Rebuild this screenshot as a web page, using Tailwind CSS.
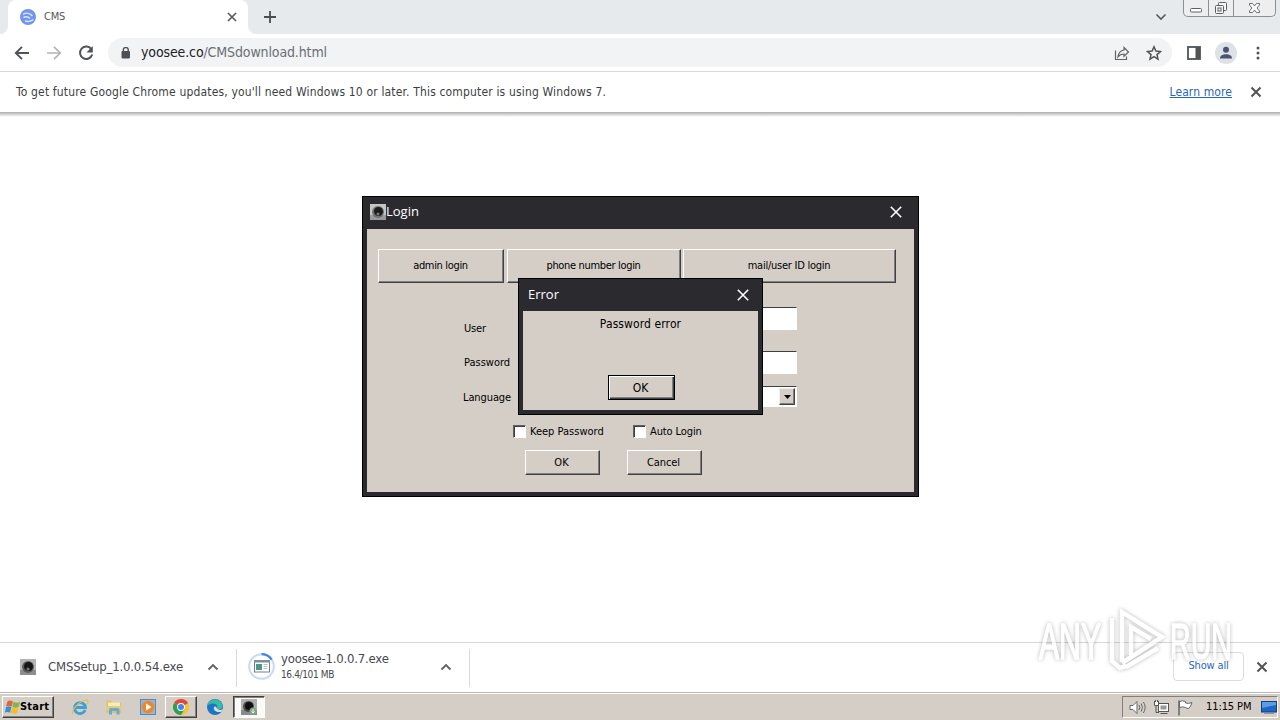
<!DOCTYPE html>
<html lang="en">
  <head>
    <meta charset="UTF-8" />
    <meta name="viewport" content="width=device-width, initial-scale=1.0" />
    <title>CMS</title>
    <script src="https://cdn.jsdelivr.net/npm/@tailwindcss/browser@4"></script>
  </head>
  <body class="relative flex h-[720px] w-[1280px] flex-col overflow-hidden bg-white font-['DejaVu_Sans_Condensed','DejaVu_Sans',sans-serif] text-[11px] text-black whitespace-nowrap">
    <!-- Tab strip -->
    <header class="flex h-[34px] shrink-0 bg-[#e7eaed]">
      <div class="w-2 bg-white"><div class="h-full rounded-br-lg bg-[#e7eaed]"></div></div>
      <div class="flex w-[240px] items-center rounded-t-lg bg-white pr-[10px] pl-3">
        <svg class="size-4" viewBox="0 0 16 16">
          <circle cx="8" cy="8" r="8" fill="#7196ec" />
          <path d="M3 5.500C6 3.500 10 4 12.500 7M3.500 8.500c3-1.500 5-.5 6.500 1M5 12c3 .8 6 .5 8.500-1.500" fill="none" stroke="#dbe7ff" stroke-width="1.500" />
        </svg>
        <span class="ml-2 tracking-[-0.2px] text-[#54585c]">CMS</span>
        <svg class="ml-auto size-3" viewBox="0 0 12 12" stroke="#54585c" stroke-width="1.600"><path d="M2 2l8 8M10 2l-8 8" /></svg>
      </div>
      <div class="w-2 bg-white"><div class="h-full rounded-bl-lg bg-[#e7eaed]"></div></div>
      <svg class="mt-[11px] ml-2 size-3" viewBox="0 0 12 12" stroke="#4a4e52" stroke-width="1.800"><path d="M6 0v12M0 6h12" /></svg>
      <svg class="mt-[13px] ml-auto h-2 w-3" viewBox="0 0 12 8" fill="none" stroke="#55595d" stroke-width="1.600"><path d="M1.500 1.500L6 6l4.500-4.500" /></svg>
      <div class="mr-1 ml-4 flex h-[17px] w-[93px] rounded-b-[5px] border border-t-0 border-[#8c8f93] bg-[#eceef0]">
        <div class="w-[25px] border-r border-[#8c8f93]">
          <svg class="h-4 w-6" viewBox="0 0 24 16" fill="#fff" stroke="#5c6065"><rect x="6.500" y="8.500" width="11" height="3.500" rx="1" /></svg>
        </div>
        <div class="w-[25px] border-r border-[#8c8f93]">
          <svg class="h-4 w-6" viewBox="0 0 24 16" fill="#f4f5f6" stroke="#5c6065"><rect x="9.500" y="2.500" width="8" height="8" rx="1" /><rect x="6.500" y="5.500" width="8" height="8" rx="1" /><rect x="9" y="8" width="3" height="3" /></svg>
        </div>
        <svg class="h-4 w-[41px]" viewBox="0 0 41 16" fill="#fff" stroke="#6a6e72"><path d="M15.500 3.500h3l2 2.500 2-2.500h3v1.500L23 8l2.500 3v1.500h-3l-2-2.500-2 2.500h-3V11L18 8l-2.500-3z" /></svg>
      </div>
    </header>

    <!-- Toolbar -->
    <div class="flex h-[38px] shrink-0 items-center border-b border-[#d5d7d9] pl-[14px]">
      <svg class="size-4" viewBox="0 0 16 16" fill="none" stroke="#505357" stroke-width="1.900"><path d="M15 8H2M8 1.800L1.800 8 8 14.200" /></svg>
      <svg class="ml-4 size-4" viewBox="0 0 16 16" fill="none" stroke="#b2b4b7" stroke-width="1.700"><path d="M1 8h13M8 1.800L14.200 8 8 14.200" /></svg>
      <svg class="ml-4 size-4" viewBox="0 0 16 16"><path d="M13.300 4.200A6.200 6.200 0 1 0 14.200 9.500" fill="none" stroke="#505357" stroke-width="2" /><path d="M14.800 1v6.500H8.500z" fill="#505357" /></svg>
      <div class="ml-[14px] flex h-[29px] w-[1064px] items-center rounded-full bg-[#f1f3f4] pr-[10px] pl-3">
        <svg class="h-3 w-3" viewBox="0 0 12 12"><rect x="1.500" y="4" width="8.500" height="7.500" rx="1" fill="#4c5054" /><path d="M3.400 4.500v-2a2.400 2 0 0 1 4.800 0v2" fill="none" stroke="#4c5054" stroke-width="1.400" /></svg>
        <span class="ml-[9px] text-[14px] tracking-[-0.12px] text-[#202124]">yoosee.co<span class="text-[#6b7075]">/CMSdownload.html</span></span>
        <svg class="ml-auto size-4" viewBox="0 0 16 16" fill="none" stroke="#606468" stroke-width="1.200"><path d="M1.500 5.500v9h11v-3M10 5V2.500L14.500 7 10 11.300V9C7.500 9 5.500 9.800 4 11.800 4.500 8 6.500 5.500 10 5z" /></svg>
        <svg class="ml-4 size-4" viewBox="0 0 16 16" fill="none" stroke="#505357" stroke-width="1.500"><path d="M8 1.800l1.900 4.300 4.600.4L11 9.600l1 4.500-4-2.400-4 2.400 1-4.500L1.500 6.500l4.600-.4z" /></svg>
      </div>
      <svg class="ml-[15px] h-[14px] w-[14px]" viewBox="0 0 14 14"><rect x="1" y="1" width="12" height="12" fill="#fff" stroke="#505357" stroke-width="1.800" /><path d="M8.500 1H13v12H8.500z" fill="#505357" /></svg>
      <svg class="ml-[14px] size-[22px]" viewBox="0 0 22 22"><circle cx="11" cy="11" r="11" fill="#dee1e5" /><circle cx="11" cy="7.800" r="3" fill="#4a5573" /><path d="M5 16.500c0-3 3-4.300 6-4.300s6 1.300 6 4.300z" fill="#4a5573" /></svg>
      <svg class="ml-[19px] h-4 w-1" viewBox="0 0 4 16" fill="#505357"><circle cx="2" cy="3" r="1.500" /><circle cx="2" cy="8" r="1.500" /><circle cx="2" cy="13" r="1.500" /></svg>
    </div>

    <!-- Infobar -->
    <div class="flex h-10 shrink-0 items-center pr-[18px] pl-4 text-[12px]">
      <span class="tracking-[0.16px] text-[#3c3f42]">To get future Google Chrome updates, you'll need Windows 10 or later. This computer is using Windows 7.</span>
      <span class="ml-auto tracking-[0.1px] text-[#2a66b8] underline">Learn more</span>
      <svg class="ml-[18px] size-3" viewBox="0 0 12 12" stroke="#505357" stroke-width="2"><path d="M1.500 1.500l9 9M10.500 1.500l-9 9" /></svg>
    </div>
    <div class="h-[5px] shrink-0 bg-gradient-to-b from-[#adadad] to-white"></div>

    <main class="grow"></main>

    <!-- Download shelf -->
    <div class="flex h-[50px] shrink-0 items-center border-t border-[#d7d8da] pr-3">
      <div class="flex h-[38px] w-[237px] items-center border-r border-[#d7d8da] pr-[17px] pb-[2px] pl-5">
        <svg class="size-4" viewBox="0 0 16 16"><rect width="16" height="16" fill="#b4b4b4" /><path d="M0 11h16v5H0z" fill="#8e8e8e" /><circle cx="8" cy="8" r="6" fill="#5d5d5d" /><circle cx="8.500" cy="7.500" r="4.500" fill="#161616" /><circle cx="8" cy="10" r="1.500" fill="#777" /></svg>
        <span class="ml-3 text-[13px] tracking-[-0.16px] text-[#46494d]">CMSSetup_1.0.0.54.exe</span>
        <svg class="ml-auto h-2 w-3" viewBox="0 0 12 8" fill="none" stroke="#606468" stroke-width="1.900"><path d="M1.500 6.500L6 2l4.500 4.500" /></svg>
      </div>
      <div class="flex h-[38px] w-[233px] items-center border-r border-[#d7d8da] pr-[17px] pb-[2px] pl-[11px]">
        <svg class="size-[27px]" viewBox="0 0 27 27">
          <circle cx="13.500" cy="13.500" r="12.300" fill="none" stroke="#c9daf3" stroke-width="2" />
          <path d="M13.500 1.200A12.300 12.300 0 0 1 23.700 6.600" fill="none" stroke="#4285e8" stroke-width="2.200" />
          <rect x="6.500" y="7.500" width="15" height="11.500" fill="#fff" stroke="#71808c" />
          <path d="M6 7h16v2.500H6z" fill="#7d8ea0" /><path d="M8 11h6v6H8z" fill="#519583" /><path d="M15.500 11.500h4M15.500 13.500h4M15.500 15.500h4" stroke="#b6c1d0" />
        </svg>
        <div class="ml-[6px] flex flex-col text-[#46494d]">
          <span class="text-[13px] leading-[17px] tracking-[-0.2px]">yoosee-1.0.0.7.exe</span>
          <span class="text-[10px] leading-[16px] tracking-[-0.36px]">16.4/101 MB</span>
        </div>
        <svg class="ml-auto h-2 w-3" viewBox="0 0 12 8" fill="none" stroke="#606468" stroke-width="1.900"><path d="M1.500 6.500L6 2l4.500 4.500" /></svg>
      </div>
      <div class="mb-[2px] ml-auto flex h-[29px] w-[71px] items-center justify-center rounded border border-[#dadce0] pb-px tracking-[-0.15px] text-[#2a66c0]"><span>Show all</span></div>
      <svg class="ml-3 mb-[2px] size-3" viewBox="0 0 12 12" stroke="#505357" stroke-width="2"><path d="M1.500 1.500l9 9M10.500 1.500l-9 9" /></svg>
    </div>

    <!-- Taskbar -->
    <footer class="flex h-[28px] shrink-0 items-center border-t border-[#bcb8b2] bg-[#d5cec7] pt-px shadow-[inset_0_1px_0_#fff]">
      <div class="ml-[2px] flex h-[22px] w-[52px] items-center border border-t-white border-r-[#404040] border-b-[#404040] border-l-white pl-[2px] shadow-[inset_-1px_-1px_0_#808080]">
        <svg class="h-4 w-[15px]" viewBox="0 0 16 16"><path d="M2.500 2C4.500.5 6 1 8.500 2L7.200 7.500C5 6.300 3.300 6.300 1.200 7.300z" fill="#e2643a" /><path d="M9.200 2.500c2 1.200 4 1.200 6.800 0L14.500 8c-2 1-4 1-6.500 0z" fill="#82b541" /><path d="M1.100 8c2-1 3.500-1 5.800 0L5.400 14C3.500 13 2 13-.2 14z" fill="#3c8ed2" /><path d="M7.700 8.500c2 1 4 1 6.600 0l-1.600 6c-2 1-4 1-6.500 0z" fill="#f4be2b" /></svg>
        <span class="tracking-[0.2px] font-bold">Start</span>
      </div>
      <svg class="ml-[17px] size-[18px]" viewBox="0 0 18 18"><path d="M14.200 12A5.500 5.500 0 1 1 14.500 9.500H5" fill="none" stroke="#3d9fd8" stroke-width="2.800" /><path d="M2 16.500C-1 13 9 2 16 2c2 1 .5 3.500-.5 5" fill="none" stroke="#e4bf4a" stroke-width="1.200" /></svg>
      <svg class="ml-4 size-[18px]" viewBox="0 0 18 18"><path d="M1.500 2.500h5l1.500 2h8V15H1.500z" fill="#e2c25f" /><path d="M3 4.500h12V10H3z" fill="#f7ecc0" /><path d="M1.500 8h15v5h-15z" fill="#e7cd70" /><path d="M4 16.500V12c0-2 2-2 2-2h6.500s2 0 2 2v4.500h-3V13h-4.500v3.500z" fill="#64acd6" /></svg>
      <svg class="ml-[17px] size-4" viewBox="0 0 16 16"><rect x=".5" y=".5" width="15" height="15" fill="#8fb8dc" stroke="#5b88b4" /><circle cx="8" cy="8" r="6.200" fill="#f0862a" /><path d="M6 4.500L11.500 8 6 11.500z" fill="#fff" /></svg>
      <div class="ml-[9px] flex h-[22px] w-[32px] items-center justify-center border border-t-white border-r-[#404040] border-b-[#404040] border-l-white shadow-[inset_-1px_-1px_0_#808080]">
        <svg class="size-4" viewBox="0 0 16 16"><circle cx="8" cy="8" r="8" fill="#f4c430" /><path d="M8 8L1.070 4A8 8 0 0 1 14.930 4z" fill="#dd4b3e" /><path d="M8 8L1.070 4A8 8 0 0 0 8 16l3.500-6z" fill="#2f9e55" /><path d="M8 4h6.930L8 8z" fill="#dd4b3e" /><circle cx="8" cy="8" r="3.900" fill="#fff" /><circle cx="8" cy="8" r="3" fill="#4285e8" /></svg>
      </div>
      <svg class="ml-[10px] size-4" viewBox="0 0 16 16"><circle cx="8" cy="8" r="8" fill="#1f75c4" /><path d="M.3 6.500C1.500 1 8-1 12 1.500S16 9 13.500 10c-2 .6-3.500 0-3.500-1 1.500-3-2-5-5-4.500C2.500 5 .8 5.700.3 6.500z" fill="#35bda6" /><path d="M7 8c-1 3 2 6 7.500 4.700L16 10c-2 1.500-5 1-6-.5S9 7 7 8z" fill="#d9dfdf" /></svg>
      <div class="ml-[10px] flex h-[22px] w-[32px] items-center justify-center border border-t-[#404040] border-r-white border-b-white border-l-[#404040] bg-[#fbfaf9] shadow-[inset_1px_1px_0_#808080]">
        <svg class="size-4" viewBox="0 0 16 16"><rect width="16" height="16" fill="#b0b0b0" /><path d="M0 11h16v5H0z" fill="#8a8a8a" /><circle cx="7.500" cy="7.500" r="5.500" fill="#4d4d4d" /><circle cx="8" cy="7" r="4" fill="#111" /><circle cx="12" cy="12" r="3.500" fill="#7fa88b" /><path d="M12 10v4M10.500 12.500l1.500 1.500 1.500-1.500" stroke="#eef5ef" fill="none" /></svg>
      </div>
      <div class="mr-[2px] ml-auto flex h-[22px] w-[156px] items-center border border-t-[#808080] border-r-white border-b-white border-l-[#808080] pl-[6px]">
        <svg class="size-[17px]" viewBox="0 0 17 17" fill="#fff" stroke="#666"><path d="M1 6.500h3L8 2.500v12l-4-4H1z" /><path d="M10 6q1.500 2.500 0 5M12.200 4.500q2.500 4 0 8M14.400 3q3.500 5.500 0 11" fill="none" /></svg>
        <svg class="ml-[7px] size-[17px]" viewBox="0 0 17 17" fill="#fff" stroke="#555"><rect x="5.500" y="4.500" width="10" height="8" /><path d="M7.500 6.500h6v4h-6z" fill="#999" stroke="none" /><path d="M7.500 14.500h7M3 7v6.500h3" fill="none" /><path d="M1.500 2v4.500h4V2M2.500 1v2M4.500 1v2" /></svg>
        <svg class="ml-[7px] size-[17px]" viewBox="0 0 17 17" fill="#fff" stroke="#666"><path d="M2.500 2.500q3-1.500 6 0v1.500q3 1 6.500-.5-1 4-3.500 6-1.500 0-3-1-3-1.200-6 0z" /><path d="M2 1.500v15" stroke-width="1.500" /></svg>
        <span class="ml-[12px] tracking-[-0.1px]">11:15 PM</span>
        <svg class="ml-auto h-[15px] w-4" viewBox="0 0 16 15"><rect x=".5" y="1.500" width="15" height="10.500" fill="#2166c5" stroke="#1a3b78" /><path d="M1 2h14v3L1 8z" fill="#5c9ee6" /><path d="M3 13.500h10" stroke="#8395aa" /></svg>
      </div>
    </footer>

    <!-- Login window -->
    <section class="absolute top-[196px] left-[362px] flex h-[301px] w-[557px] flex-col border border-black bg-[#2b2a2f] px-1 pb-1">
      <div class="flex h-8 shrink-0 items-center pr-3 pb-[2px] pl-[3px] text-white">
        <svg class="size-4" viewBox="0 0 16 16"><rect width="16" height="16" fill="#c4c4c4" /><path d="M0 11h16v5H0z" fill="#999" /><circle cx="8" cy="8" r="6" fill="#727272" /><circle cx="8.500" cy="7.500" r="4.500" fill="#1c1c1c" /><circle cx="8" cy="10" r="1.500" fill="#777" /></svg>
        <span class="font-['Open_Sans'] text-[13px]">Login</span>
        <svg class="ml-auto size-3" viewBox="0 0 12 12" stroke="#fff" stroke-width="1.600"><path d="M.8.8l10.400 10.400M11.200.8L.8 11.200" /></svg>
      </div>
      <div class="grow bg-[#d5cec7] pt-5">
        <div class="ml-[11px] flex h-[34px] tracking-[-0.33px]">
          <button class="w-[126px] border border-t-white border-r-[#404040] border-b-[#404040] border-l-white pt-px pr-px shadow-[inset_-1px_-1px_0_#808080]">admin login</button>
          <button class="ml-[3px] w-[174px] border border-t-white border-r-[#404040] border-b-[#404040] border-l-white pt-px pr-px shadow-[inset_-1px_-1px_0_#808080]">phone number login</button>
          <button class="ml-[2px] w-[213px] border border-t-white border-r-[#404040] border-b-[#404040] border-l-white pt-px pr-px tracking-[-0.25px] shadow-[inset_-1px_-1px_0_#808080]">mail/user ID login</button>
        </div>
        <div class="mt-6 ml-24 grid grid-cols-[56px_278px] grid-rows-[23px_44px_33px]">
          <span class="ml-px pt-[14px] leading-4 tracking-[-0.2px]">User</span>
          <div class="h-[23px] border border-t-[#404040] border-r-white border-b-white border-l-[#404040] bg-white"></div>
          <span class="mt-[25px] ml-px leading-4">Password</span>
          <div class="mt-[21px] h-[23px] border border-t-[#404040] border-r-white border-b-white border-l-[#404040] bg-white"></div>
          <span class="mt-[16px] leading-4 tracking-[-0.1px]">Language</span>
          <div class="mt-[12px] flex h-[21px] justify-end border border-t-[#404040] border-r-white border-b-white border-l-[#404040] bg-white py-px pr-px">
            <div class="flex w-4 items-center justify-center border border-t-[#eee] border-r-[#404040] border-b-[#404040] border-l-[#eee] bg-[#d5cec7] shadow-[inset_-1px_-1px_0_#808080]">
              <svg class="h-1 w-[7px]" viewBox="0 0 7 4"><path d="M0 0h7L3.500 4z" /></svg>
            </div>
          </div>
        </div>
        <div class="mt-[17px] ml-[146px] flex items-center leading-[13px]">
          <div class="size-[13px] border border-t-[#606060] border-r-white border-b-white border-l-[#606060] bg-white shadow-[inset_1px_1px_0_#404040]"></div>
          <span class="ml-1 w-[103px] pt-px">Keep Password</span>
          <div class="size-[13px] border border-t-[#606060] border-r-white border-b-white border-l-[#606060] bg-white shadow-[inset_1px_1px_0_#404040]"></div>
          <span class="ml-1 pt-px tracking-[-0.1px]">Auto Login</span>
        </div>
        <div class="mt-[12px] ml-[158px] flex gap-[27px]">
          <button class="h-[25px] w-[75px] border border-t-white border-r-[#404040] border-b-[#404040] border-l-white pt-px pr-[2px] shadow-[inset_-1px_-1px_0_#808080]">OK</button>
          <button class="h-[25px] w-[75px] border border-t-white border-r-[#404040] border-b-[#404040] border-l-white pt-px pr-[2px] tracking-[-0.1px] shadow-[inset_-1px_-1px_0_#808080]">Cancel</button>
        </div>
      </div>
    </section>

    <!-- Error window -->
    <section class="absolute top-[278px] left-[518px] flex h-[137px] w-[245px] flex-col border border-black bg-[#2b2a2f] px-1 pb-1">
      <div class="flex h-8 shrink-0 items-center pr-[9px] pb-px pl-[5px] text-white">
        <span class="font-['Open_Sans'] text-[13px]">Error</span>
        <svg class="ml-auto size-3" viewBox="0 0 12 12" stroke="#fff" stroke-width="1.600"><path d="M.8.8l10.400 10.400M11.200.8L.8 11.200" /></svg>
      </div>
      <div class="flex grow flex-col items-center bg-[#d5cec7] pt-[5px] text-[12px]">
        <span class="leading-4 tracking-[0.1px]">Password error</span>
        <button class="mt-[43px] ml-[2px] h-[25px] w-[67px] border border-black pr-[2px] shadow-[inset_1px_1px_0_#fff,inset_-1px_-1px_0_#404040,inset_-2px_-2px_0_#808080]">OK</button>
      </div>
    </section>

    <!-- Watermark -->
    <svg class="absolute top-[600px] left-[1030px] h-[80px] w-[212px] opacity-70 drop-shadow-[0_0_2px_rgba(0,0,0,0.4)]" viewBox="0 0 212 80" fill="#fff" font-family="Liberation Sans, sans-serif" font-size="50">
      <text x="9" y="59" textLength="62" lengthAdjust="spacingAndGlyphs" stroke="#fff" stroke-width="1.500">ANY</text>
      <text x="140" y="59" textLength="62" lengthAdjust="spacingAndGlyphs" stroke="#fff" stroke-width="1.500">RUN</text>
      <path d="M82 18v43l8 7 6-2M92 62V12l40 25-40 26M101 55V27l20 12M96 67l32-19" fill="none" stroke="#fff" stroke-width="4.500" />
    </svg>
  </body>
</html>
